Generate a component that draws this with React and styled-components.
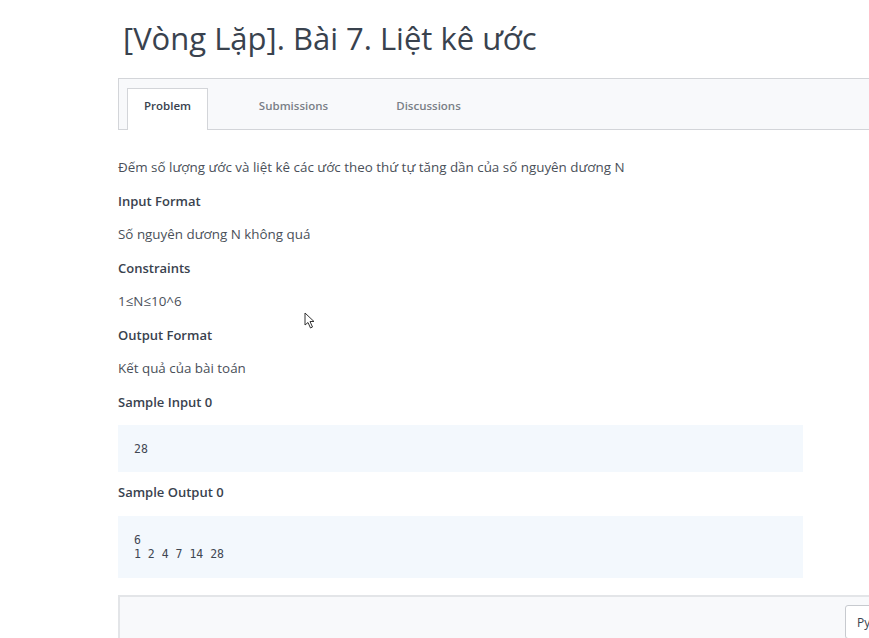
import React from "react";
import styled, { createGlobalStyle } from "styled-components";

const Global = createGlobalStyle`
  html, body { margin: 0; padding: 0; background: #fff; overflow: hidden; }
  body { font-family: "Open Sans", "Noto Sans", sans-serif; width: 869px; height: 638px; }
`;

const Page = styled.div`
  position: relative;
  width: 869px;
  height: 638px;
  overflow: hidden;
  padding-left: 118px;
  box-sizing: border-box;
`;

const Title = styled.h1`
  margin: 0;
  padding: 19px 0 0 5px;
  height: 78px;
  box-sizing: border-box;
  font-size: 31px;
  font-weight: 500;
  color: #39424e;
  line-height: 38px;
  white-space: nowrap;
`;

const TabBar = styled.div`
  display: flex;
  align-items: flex-end;
  width: 900px;
  height: 52px;
  box-sizing: border-box;
  padding-left: 8px;
  background: #f8f9fb;
  border-top: 1px solid #d3d5d9;
  border-left: 1px solid #d3d5d9;
  border-bottom: 1px solid #d3d5d9;
`;

const Tab = styled.div`
  height: 42px;
  box-sizing: border-box;
  width: ${(p) => p.$w}px;
  display: flex;
  align-items: center;
  justify-content: center;
  font-size: 11.5px;
  font-weight: 600;
  color: ${(p) => (p.$active ? "#39424e" : "#7a7f87")};
  background: ${(p) => (p.$active ? "#fff" : "transparent")};
  border: 1px solid ${(p) => (p.$active ? "#d3d5d9" : "transparent")};
  border-bottom: none;
  margin-bottom: -1px;
  padding-bottom: 9px;
`;

const Body = styled.div`
  width: 685px;
  padding-top: 28px;
`;

const Para = styled.p`
  margin: 0;
  height: 33.5px;
  font-size: 13.4px;
  line-height: 18px;
  color: #4a5059;
  white-space: nowrap;
`;

const Heading = styled.p`
  margin: 0;
  height: 33.5px;
  font-size: 13px;
  line-height: 18px;
  font-weight: 600;
  color: #39424e;
`;

const Code = styled.pre`
  margin: ${(p) => p.$mt}px 0 ${(p) => p.$mb}px 0;
  padding: 17px 16px;
  background: #f3f8fd;
  font-family: "DejaVu Sans Mono", "Liberation Mono", monospace;
  font-size: 11.5px;
  line-height: 14px;
  color: #3f4752;
  height: ${(p) => p.$h}px;
  box-sizing: border-box;
`;

const Editor = styled.div`
  width: 900px;
  height: 60px;
  box-sizing: border-box;
  background: #f8f9fb;
  border-top: 2px solid #e3e5e8;
  border-left: 2px solid #e3e5e8;
  display: flex;
  padding: 8px 0 0 725px;
`;

const LangButton = styled.div`
  width: 60px;
  height: 34px;
  box-sizing: border-box;
  border: 1px solid #c7cacf;
  border-radius: 3px;
  background: #fff;
  font-size: 12px;
  color: #39424e;
  padding: 8px 0 0 11px;
  white-space: nowrap;
  overflow: hidden;
`;

const Cursor = styled.svg`
  position: absolute;
  left: 304px;
  top: 312px;
`;

export default function App() {
  return (
    <>
      <Global />
      <Page>
        <Title>[Vòng Lặp]. Bài 7. Liệt kê ước</Title>
        <TabBar>
          <Tab $active $w={81}>Problem</Tab>
          <Tab $w={171}>Submissions</Tab>
          <Tab $w={99}>Discussions</Tab>
        </TabBar>
        <Body>
          <Para>Đếm số lượng ước và liệt kê các ước theo thứ tự tăng dần của số nguyên dương N</Para>
          <Heading>Input Format</Heading>
          <Para>Số nguyên dương N không quá</Para>
          <Heading>Constraints</Heading>
          <Para>1≤N≤10^6</Para>
          <Heading>Output Format</Heading>
          <Para>Kết quả của bài toán</Para>
          <Heading>Sample Input 0</Heading>
          <Code $h={47} $mt={-1} $mb={11}>28</Code>
          <Heading>Sample Output 0</Heading>
          <Code $h={62} $mt={-1} $mb={17}>{"6\n1 2 4 7 14 28"}</Code>
        </Body>
        <Editor>
          <LangButton>Python 3</LangButton>
        </Editor>
        <Cursor width="12" height="18" viewBox="0 0 12 18">
          <path d="M1 1 L1 13 L4 10.5 L6.5 16 L8.5 15 L6 9.5 L10 9.5 Z" fill="#fff" stroke="#333" strokeWidth="1" strokeLinejoin="round" />
        </Cursor>
      </Page>
    </>
  );
}
